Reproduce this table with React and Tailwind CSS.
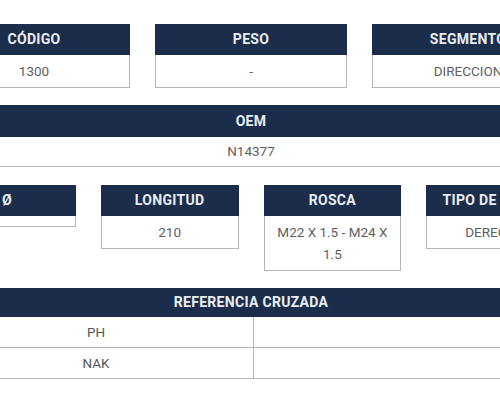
import React from "react";

const font = { fontFamily: "Roboto, 'Noto Sans', sans-serif" };

function Card({ title, value }) {
  return (
    <div className="flex flex-col">
      <div className="bg-[#1b2d4a] text-[#e9edf2] text-[14px] font-bold h-[31px] flex items-center justify-center uppercase tracking-[0.3px]">
        {title}
      </div>
      <div className="border-x border-b border-[#b5b5b5] bg-white text-[#5f5f5f] text-[13.5px] leading-[22px] text-center px-[10px] py-[5px] min-h-[9px]">
        {value}
      </div>
    </div>
  );
}

export default function App() {
  return (
    <div className="w-[500px] h-[400px] overflow-hidden bg-white" style={font}>
      <div className="w-[626px] ml-[-62px] pt-[24px] flex flex-col">
        <div className="grid grid-cols-3 gap-[25px] items-start">
          <Card title="CÓDIGO" value="1300" />
          <Card title="PESO" value="-" />
          <Card title="SEGMENTO" value="DIRECCION" />
        </div>

        <div className="mt-[17px] flex flex-col">
          <div className="bg-[#1b2d4a] text-[#e9edf2] text-[14px] font-bold h-[32px] flex items-center justify-center tracking-[0.3px]">
            OEM
          </div>
          <div className="border-x border-b border-[#b5b5b5] text-[#5f5f5f] text-[13.5px] h-[30px] flex items-center justify-center">
            N14377
          </div>
        </div>

        <div className="mt-[18px] grid grid-cols-4 gap-[25px] items-start">
          <Card title="Ø" value="" />
          <Card title="LONGITUD" value="210" />
          <Card title="ROSCA" value="M22 X 1.5 - M24 X 1.5" />
          <Card title="TIPO DE ROSCA" value="DERECHA" />
        </div>

        <div className="mt-[17px] flex flex-col">
          <div className="bg-[#1b2d4a] text-[#e9edf2] text-[14px] font-bold h-[29px] flex items-center justify-center tracking-[0.3px]">
            REFERENCIA CRUZADA
          </div>
          <div className="grid grid-cols-[314px_1fr] border-x border-[#b5b5b5]">
            <div className="h-[31px] flex items-center justify-center text-[13.5px] text-[#575757] border-b border-[#b5b5b5]">PH</div>
            <div className="h-[31px] border-b border-l border-[#b5b5b5]"></div>
            <div className="h-[31px] flex items-center justify-center text-[13.5px] text-[#575757] border-b border-[#b5b5b5]">NAK</div>
            <div className="h-[31px] border-b border-l border-[#b5b5b5]"></div>
          </div>
        </div>
      </div>
    </div>
  );
}
